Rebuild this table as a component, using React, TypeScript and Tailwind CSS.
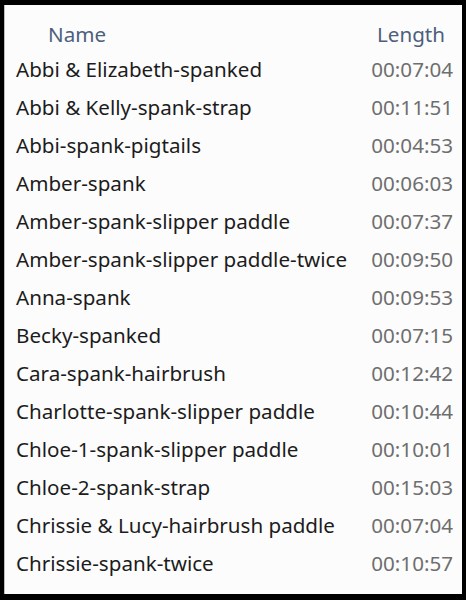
const files = [
  { name: "Abbi & Elizabeth-spanked", length: "00:07:04" },
  { name: "Abbi & Kelly-spank-strap", length: "00:11:51" },
  { name: "Abbi-spank-pigtails", length: "00:04:53" },
  { name: "Amber-spank", length: "00:06:03" },
  { name: "Amber-spank-slipper paddle", length: "00:07:37" },
  { name: "Amber-spank-slipper paddle-twice", length: "00:09:50" },
  { name: "Anna-spank", length: "00:09:53" },
  { name: "Becky-spanked", length: "00:07:15" },
  { name: "Cara-spank-hairbrush", length: "00:12:42" },
  { name: "Charlotte-spank-slipper paddle", length: "00:10:44" },
  { name: "Chloe-1-spank-slipper paddle", length: "00:10:01" },
  { name: "Chloe-2-spank-strap", length: "00:15:03" },
  { name: "Chrissie & Lucy-hairbrush paddle", length: "00:07:04" },
  { name: "Chrissie-spank-twice", length: "00:10:57" },
];

export default function App() {
  return (
    <div className="w-[466px] h-[600px] bg-black pt-[5px] pl-[4px] pr-[4px] pb-[6px]">
      <div
        className="h-full bg-[#fcfcfc] border-l border-[#bdbdbd] text-[20.6px]"
        style={{ fontFamily: '"Noto Sans", "Open Sans", sans-serif' }}
      >
        {/* header */}
        <div className="flex justify-between h-[45px] pt-[14px] leading-[30px] text-[#4d5f7c]">
          <span className="pl-[43px]">Name</span>
          <span className="pr-[17px]">Length</span>
        </div>

        {/* rows */}
        {files.map((f, i) => (
          <div key={i} className="flex justify-between h-[38px] leading-[38px]">
            <span className="pl-[11px] text-[#1c1c1c]">{f.name}</span>
            <span className="pr-[9px] text-[#6e6e6e]">{f.length}</span>
          </div>
        ))}
      </div>
    </div>
  );
}
